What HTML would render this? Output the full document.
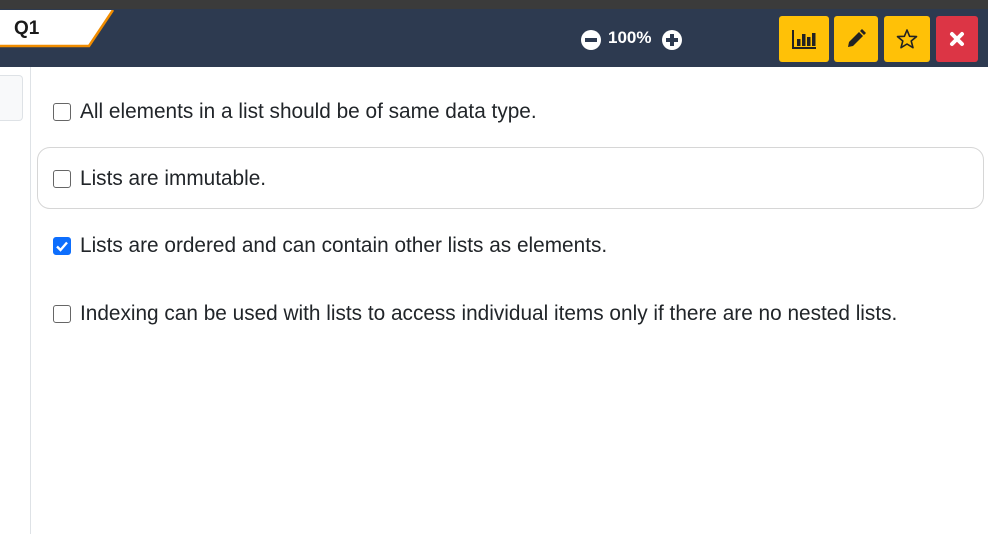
<!DOCTYPE html>
<html><head><style>
*{margin:0;padding:0;box-sizing:border-box}
body{width:988px;height:534px;overflow:hidden;background:#fff;font-family:"Liberation Sans",sans-serif;position:relative}
.top{position:absolute;left:0;top:0;width:988px;height:9px;background:#3b3b3b}
.nav{position:absolute;left:0;top:9px;width:988px;height:58px;background:#2d3a50}
.btn{position:absolute;top:16px;height:46px;border-radius:3px;background:#ffc107;display:flex;align-items:center;justify-content:center}
.side{position:absolute;left:0;top:75px;width:23px;height:46px;background:#f8f9fa;border:1px solid #dee2e6;border-left:none;border-radius:0 4px 4px 0}
.vl{position:absolute;left:30px;top:67px;width:1px;height:467px;background:#dee2e6}
.opt{position:absolute;left:53px;font-size:20.8px;color:#212529;display:flex;align-items:center}
.cb{width:18px;height:18px;border:1.5px solid #666;border-radius:3px;margin-right:9px;background:#fff}
.cb.on{background:#0d6efd;border-color:#0d6efd;display:flex;align-items:center;justify-content:center}
.card{position:absolute;left:37px;top:147px;width:947px;height:62px;border:1px solid #d6d6d6;border-radius:13px}
</style></head><body>
<div class="top"></div>
<div class="nav"></div>
<svg style="position:absolute;left:0;top:10px" width="120" height="38"><polygon points="0,0 113,0 89,36 0,36" fill="#fff"/><polyline points="113,0 89,36 0,36" fill="none" stroke="#f08c00" stroke-width="2.5"/></svg>
<div style="position:absolute;left:14px;top:18px;font-weight:bold;font-size:19px;color:#1a1a1a">Q1</div>
<svg style="position:absolute;left:580px;top:29px" width="22" height="22"><circle cx="11" cy="11" r="10" fill="#fff"/><rect x="5" y="9" width="12" height="4" fill="#2d3a50"/></svg>
<div style="position:absolute;left:608px;top:28px;color:#fff;font-weight:bold;font-size:17px">100%</div>
<svg style="position:absolute;left:661px;top:29px" width="22" height="22"><circle cx="11" cy="11" r="10" fill="#fff"/><rect x="5" y="9" width="12" height="4" fill="#2d3a50"/><rect x="9" y="5" width="4" height="12" fill="#2d3a50"/></svg>
<div class="btn" style="left:779px;width:50px"><svg width="26" height="22"><path d="M2 2V20H25" stroke="#222" stroke-width="2" fill="none"/><rect x="6" y="11" width="3.5" height="7" fill="#222"/><rect x="11" y="6" width="3.5" height="12" fill="#222"/><rect x="16" y="9" width="3.5" height="9" fill="#222"/><rect x="21" y="5" width="3.5" height="13" fill="#222"/></svg></div>
<div class="btn" style="left:834px;width:44px"><svg width="20" height="20"><path d="M2 18L3 13L13 3L17 7L7 17Z" fill="#222"/><path d="M14 2L16 0L20 4L18 6Z" fill="#222"/></svg></div>
<div class="btn" style="left:884px;width:46px"><svg width="22" height="22"><polygon points="11,2 13.6,8.3 20.5,8.6 15.2,13 17,19.7 11,16 5,19.7 6.8,13 1.5,8.6 8.4,8.3" fill="none" stroke="#222" stroke-width="1.6" stroke-linejoin="round"/></svg></div>
<div class="btn" style="left:936px;width:42px;background:#dc3545"><svg width="16" height="16"><path d="M3 3L13 13M13 3L3 13" stroke="#fff" stroke-width="4" stroke-linecap="round"/></svg></div>
<div class="side"></div>
<div class="vl"></div>
<div class="card"></div>
<div class="opt" style="top:100px"><div class="cb"></div>All elements in a list should be of same data type.</div>
<div class="opt" style="top:167px"><div class="cb"></div>Lists are immutable.</div>
<div class="opt" style="top:234px"><div class="cb on"><svg width="14" height="14"><path d="M2 7.5L5.5 11L12 3.5" stroke="#fff" stroke-width="2.4" fill="none"/></svg></div>Lists are ordered and can contain other lists as elements.</div>
<div class="opt" style="top:302px"><div class="cb"></div>Indexing can be used with lists to access individual items only if there are no nested lists.</div>
</body></html>
